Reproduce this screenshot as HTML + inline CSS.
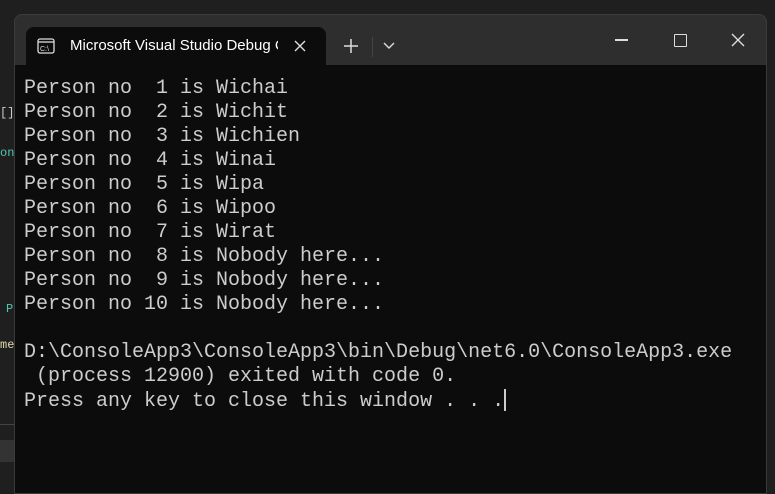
<!DOCTYPE html><html><head><style>
body{margin:0;width:775px;height:485px;background:#1f1f1f;position:relative;overflow:hidden;font-family:"Liberation Sans",sans-serif}
.win{position:absolute;left:14px;top:14px;width:753px;height:480px;background:#2e2e2e;border-radius:8px 8px 0 0;border:1px solid #3a3a3a;box-sizing:border-box}
.tab{position:absolute;left:11px;top:12px;width:300px;height:38px;background:#0c0c0c;border-radius:8px 8px 0 0}
.con{position:absolute;left:0;top:50px;right:0;bottom:0;background:#0c0c0c}
pre{margin:0;position:absolute;left:9px;top:12px;font:20px/24px "Liberation Mono",monospace;color:#cccccc}
.side{position:absolute;font:12px "Liberation Mono",monospace}
</style></head><body>
<div class="side" style="left:0;top:106px;color:#ccc">[]</div>
<div class="side" style="left:0;top:146px;color:#4ec9b0">on</div>
<div class="side" style="left:6px;top:302px;color:#4ec9b0">P</div>
<div class="side" style="left:0;top:338px;color:#dcdcaa">me</div>
<div style="position:absolute;left:0;top:424px;width:14px;height:1px;background:#444"></div>
<div style="position:absolute;left:0;top:440px;width:14px;height:22px;background:#333"></div>
<div class="win">
<div class="tab">
<svg style="position:absolute;left:11px;top:11px" width="18" height="16" viewBox="0 0 18 16"><rect x="1" y="1" width="16" height="14" rx="2" fill="none" stroke="#ddd" stroke-width="1.3"/><line x1="1" y1="4" x2="17" y2="4" stroke="#ddd" stroke-width="1.3"/><text x="3" y="13" font-size="7" fill="#ddd" font-family="Liberation Sans">C:\</text></svg>
<div style="position:absolute;left:44px;top:10px;color:#fff;font-size:15px;width:208px;overflow:hidden;white-space:nowrap">Microsoft Visual Studio Debug Console</div>
<svg style="position:absolute;left:267px;top:12px" width="14" height="14"><path d="M2 2L12 12M12 2L2 12" stroke="#ddd" stroke-width="1.4"/></svg>
</div>
<svg style="position:absolute;left:328px;top:23px" width="16" height="16"><path d="M8 1V15M1 8H15" stroke="#ddd" stroke-width="1.5"/></svg>
<div style="position:absolute;left:357px;top:22px;width:1px;height:20px;background:#444"></div>
<svg style="position:absolute;left:368px;top:27px" width="12" height="8"><path d="M1 1L6 6L11 1" stroke="#ddd" stroke-width="1.4" fill="none"/></svg>
<div style="position:absolute;left:600px;top:24px;width:13px;height:1.5px;background:#ddd"></div>
<div style="position:absolute;left:659px;top:19px;width:11px;height:11px;border:1.3px solid #ddd;border-radius:1px"></div>
<svg style="position:absolute;left:716px;top:18px" width="14" height="14"><path d="M1 1L13 13M13 1L1 13" stroke="#ddd" stroke-width="1.4"/></svg>
<div class="con"><pre>Person no  1 is Wichai
Person no  2 is Wichit
Person no  3 is Wichien
Person no  4 is Winai
Person no  5 is Wipa
Person no  6 is Wipoo
Person no  7 is Wirat
Person no  8 is Nobody here...
Person no  9 is Nobody here...
Person no 10 is Nobody here...

D:\ConsoleApp3\ConsoleApp3\bin\Debug\net6.0\ConsoleApp3.exe
 (process 12900) exited with code 0.
Press any key to close this window . . .<span style="display:inline-block;width:1.5px;height:22px;background:#ccc;vertical-align:-5px"></span></pre></div>
</div>
</body></html>
